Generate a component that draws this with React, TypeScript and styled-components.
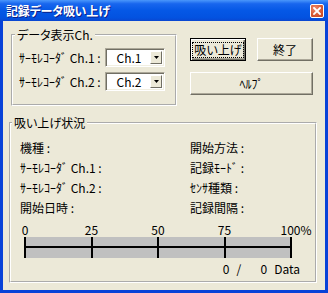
import styled, { createGlobalStyle } from 'styled-components';

const GlobalStyle = createGlobalStyle`
  html, body {
    margin: 0;
    padding: 0;
    background: #ECE9D8;
  }
  body {
    font-family: "Noto Sans CJK JP", "Noto Sans", sans-serif;
    font-size: 12px;
    color: #000;
  }
`;

const Window = styled.div`
  width: 328px;
  height: 293px;
  display: flex;
  flex-direction: column;
  background: #0842d8;
  box-sizing: border-box;
`;

const TitleBar = styled.div`
  height: 21px;
  display: flex;
  align-items: center;
  justify-content: space-between;
  padding: 0 4px 0 6px;
  background: linear-gradient(
    to bottom,
    #4a97fb 0%,
    #1866ee 18%,
    #0558e6 50%,
    #0352e0 85%,
    #0a46d0 100%
  );
`;

const Title = styled.span`
  color: #fff;
  font-weight: bold;
  font-size: 12px;
  font-feature-settings: "palt";
  text-shadow: 1px 1px 0 #0a1e8a;
  letter-spacing: -0.2px;
`;

const CloseButton = styled.div`
  width: 14px;
  height: 14px;
  box-sizing: border-box;
  border: 1px solid #fff;
  border-radius: 2px;
  background: radial-gradient(circle at 35% 30%, #f08a6a 0%, #d85a35 55%, #c0421c 100%);
  display: flex;
  align-items: center;
  justify-content: center;
`;

const Client = styled.div`
  flex: 1;
  margin: 0 3px 3px;
  background: #ece9d8;
  box-sizing: border-box;
  padding: 7px 8px 7px 6px;
  display: flex;
  flex-direction: column;
  gap: 10px;
`;

const TopRow = styled.div`
  display: flex;
  align-items: flex-start;
`;

const GroupBox = styled.fieldset<{ $w: number; $h: number; $inset?: number }>`
  margin: 0 0 0 ${(p) => p.$inset ?? 0}px;
  padding: 0;
  min-width: 0;
  width: ${(p) => p.$w}px;
  height: ${(p) => p.$h}px;
  box-sizing: border-box;
  border: 2px groove #fff;
`;

const Legend = styled.legend<{ $indent: number }>`
  margin-left: ${(p) => p.$indent}px;
  padding: 0 2px;
  height: 14px;
  line-height: 14px;
  font-feature-settings: "palt";
`;

const ChannelGrid = styled.div`
  display: grid;
  grid-template-columns: 86px 60px;
  row-gap: 5px;
  align-items: center;
  padding: 6px 0 0 6px;
`;

const FieldLabel = styled.span`
  white-space: nowrap;
`;

const Combo = styled.div`
  width: 60px;
  height: 19px;
  box-sizing: border-box;
  display: flex;
  align-items: stretch;
  background: #fff;
  border: 1px solid;
  border-color: #aca899 #fff #fff #aca899;
  box-shadow: inset 1px 1px 0 #716f64, inset -1px -1px 0 #f1efe2;
  padding: 2px;
`;

const ComboText = styled.span`
  flex: 1;
  text-align: center;
  line-height: 13px;
`;

const DropButton = styled.span`
  width: 12px;
  box-sizing: border-box;
  background: #ece9d8;
  border: 1px solid;
  border-color: #fff #716f64 #716f64 #fff;
  display: flex;
  align-items: center;
  justify-content: center;
`;

const ButtonGrid = styled.div`
  display: grid;
  grid-template-columns: 56px 56px;
  grid-auto-rows: 23px;
  column-gap: 11px;
  row-gap: 11px;
  margin: 10px 0 0 13px;
`;

const Button = styled.div<{ $default?: boolean; $wide?: boolean }>`
  box-sizing: border-box;
  grid-column: ${(p) => (p.$wide ? '1 / span 2' : 'auto')};
  display: flex;
  align-items: center;
  justify-content: center;
  background: #ece9d8;
  border: 1px solid;
  border-color: ${(p) => (p.$default ? '#000' : '#fff #716f64 #716f64 #fff')};
  box-shadow: ${(p) =>
    p.$default
      ? 'inset 1px 1px 0 #fff, inset -1px -1px 0 #716f64, inset -2px -2px 0 #aca899'
      : 'inset -1px -1px 0 #aca899'};
  font-feature-settings: "palt";
`;

const FocusRect = styled.span`
  border: 1px dotted #000;
  padding: 0 1px;
  line-height: 14px;
`;

const StatusBody = styled.div`
  padding: 7px 9px 0 9px;
  display: flex;
  flex-direction: column;
`;

const InfoGrid = styled.div`
  display: grid;
  grid-template-columns: 170px 1fr;
  grid-auto-rows: 20px;
  align-items: center;
  white-space: nowrap;
`;

const ScaleLabels = styled.div`
  margin: 6px 0 0 4px;
  width: 268px;
  height: 14px;
  line-height: 14px;
  display: flex;
  justify-content: space-between;
`;

const ScaleMark = styled.span`
  width: 2px;
  display: flex;
  justify-content: center;
  white-space: nowrap;
`;

const Percent = styled.span`
  margin-right: -10px;
`;

const Bar = styled.div`
  margin-left: 4px;
  width: 268px;
  height: 21px;
  display: flex;
  justify-content: space-between;
  background: linear-gradient(#000, #000) 0 9px / 100% 2px no-repeat, #c0c0c0;
`;

const Tick = styled.span`
  width: 2px;
  background: #000;
`;

const DataRow = styled.div`
  margin: 4px 6px 0 0;
  display: flex;
  justify-content: flex-end;
  line-height: 14px;
`;

const Count = styled.span<{ $w?: number }>`
  width: ${(p) => (p.$w ? `${p.$w}px` : 'auto')};
  text-align: right;
`;

const Slash = styled.span`
  margin-left: 7px;
`;

const Unit = styled.span`
  margin-left: 7px;
`;

const channels = ['Ch.1', 'Ch.2'];
const leftInfo = ['機種 :', 'ｻｰﾓﾚｺｰﾀﾞ Ch.1 :', 'ｻｰﾓﾚｺｰﾀﾞ Ch.2 :', '開始日時 :'];
const rightInfo = ['開始方法 :', '記録ﾓｰﾄﾞ :', 'ｾﾝｻ種類 :', '記録間隔 :'];
const marks = ['0', '25', '50', '75'];

export default function App() {
  return (
    <>
      <GlobalStyle />
      <Window>
        <TitleBar>
          <Title>記録データ吸い上げ</Title>
          <CloseButton>
            <svg width="8" height="8" viewBox="0 0 8 8">
              <path d="M1 1L7 7M7 1L1 7" stroke="#fff" strokeWidth="1.8" strokeLinecap="square" />
            </svg>
          </CloseButton>
        </TitleBar>
        <Client>
          <TopRow>
            <GroupBox $w={166} $h={78} $inset={2}>
              <Legend $indent={2}>データ表示Ch.</Legend>
              <ChannelGrid>
                {channels.map((ch) => (
                  <>
                    <FieldLabel key={`l${ch}`}>ｻｰﾓﾚｺｰﾀﾞ {ch} :</FieldLabel>
                    <Combo key={`c${ch}`}>
                      <ComboText>{ch}</ComboText>
                      <DropButton>
                        <svg width="5" height="3" viewBox="0 0 5 3">
                          <path d="M0 0H5L2.5 3Z" fill="#000" />
                        </svg>
                      </DropButton>
                    </Combo>
                  </>
                ))}
              </ChannelGrid>
            </GroupBox>
            <ButtonGrid>
              <Button $default>
                <FocusRect>吸い上げ</FocusRect>
              </Button>
              <Button>終了</Button>
              <Button $wide>ﾍﾙﾌﾟ</Button>
            </ButtonGrid>
          </TopRow>
          <GroupBox $w={308} $h={167}>
            <Legend $indent={1}>吸い上げ状況</Legend>
            <StatusBody>
              <InfoGrid>
                {leftInfo.map((l, i) => (
                  <>
                    <span key={`a${i}`}>{l}</span>
                    <span key={`b${i}`}>{rightInfo[i]}</span>
                  </>
                ))}
              </InfoGrid>
              <ScaleLabels>
                {marks.map((m) => (
                  <ScaleMark key={m}>{m}</ScaleMark>
                ))}
                <ScaleMark>
                  100<Percent>%</Percent>
                </ScaleMark>
              </ScaleLabels>
              <Bar>
                {[0, 1, 2, 3, 4].map((i) => (
                  <Tick key={i} />
                ))}
              </Bar>
              <DataRow>
                <Count>0</Count>
                <Slash>/</Slash>
                <Count $w={26}>0</Count>
                <Unit>Data</Unit>
              </DataRow>
            </StatusBody>
          </GroupBox>
        </Client>
      </Window>
    </>
  );
}
